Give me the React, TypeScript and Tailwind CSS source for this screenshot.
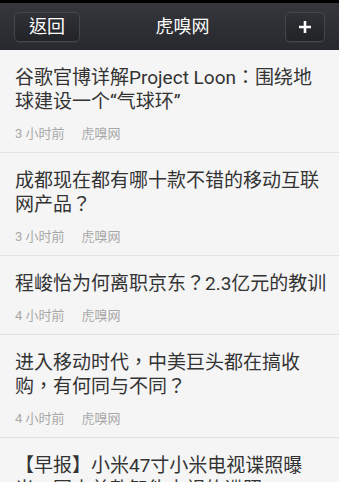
import React from "react";

type Item = { title: string; time: string; source: string };

const ITEMS: Item[] = [
  { title: "谷歌官博详解Project Loon：围绕地球建设一个“气球环”", time: "3 小时前", source: "虎嗅网" },
  { title: "成都现在都有哪十款不错的移动互联网产品？", time: "3 小时前", source: "虎嗅网" },
  { title: "程峻怡为何离职京东？2.3亿元的教训", time: "4 小时前", source: "虎嗅网" },
  { title: "进入移动时代，中美巨头都在搞收购，有何同与不同？", time: "4 小时前", source: "虎嗅网" },
  { title: "【早报】小米47寸小米电视谍照曝光，国内首款智能电视的谍照", time: "4 小时前", source: "虎嗅网" },
];

const FONT = "font-['Roboto','Noto_Sans_CJK_TC',sans-serif]";

function HeaderButton({ children, className }: { children: React.ReactNode; className?: string }) {
  return (
    <button
      type="button"
      className={`flex h-[30px] items-center justify-center rounded-[5px] border border-[#45464b] bg-gradient-to-b from-[#303136] to-[#222327] text-white shadow-[0_1px_0_rgba(255,255,255,0.05)] ${className ?? ""}`}
    >
      {children}
    </button>
  );
}

export default function App() {
  return (
    <div className={`h-[482px] w-[339px] overflow-hidden bg-[#f5f5f5] ${FONT}`}>
      <div className="flex h-[50px] items-center justify-between border-t-[3px] border-black bg-gradient-to-b from-[#36373c] to-[#28292e] px-[14px]">
        <HeaderButton className="w-[66px] text-[18px]">返回</HeaderButton>
        <div className="text-[18px] text-white">虎嗅网</div>
        <HeaderButton className="w-[40px]">
          <svg width="14" height="14" viewBox="0 0 14 14">
            <path d="M7 1v12M1 7h12" stroke="white" strokeWidth="2.6" />
          </svg>
        </HeaderButton>
      </div>
      <div>
        {ITEMS.map((it, i) => (
          <div key={i} className="border-b border-[#e2e2e2] pb-[10px] pl-[15px] pr-[10px] pt-4">
            <div className="text-[19px] leading-[24px] text-[#333333]">{it.title}</div>
            <div className="mt-3 text-[13px] leading-4 text-[#a8a8a8]">
              <span>{it.time}</span>
              <span className="ml-[17px]">{it.source}</span>
            </div>
          </div>
        ))}
      </div>
    </div>
  );
}
